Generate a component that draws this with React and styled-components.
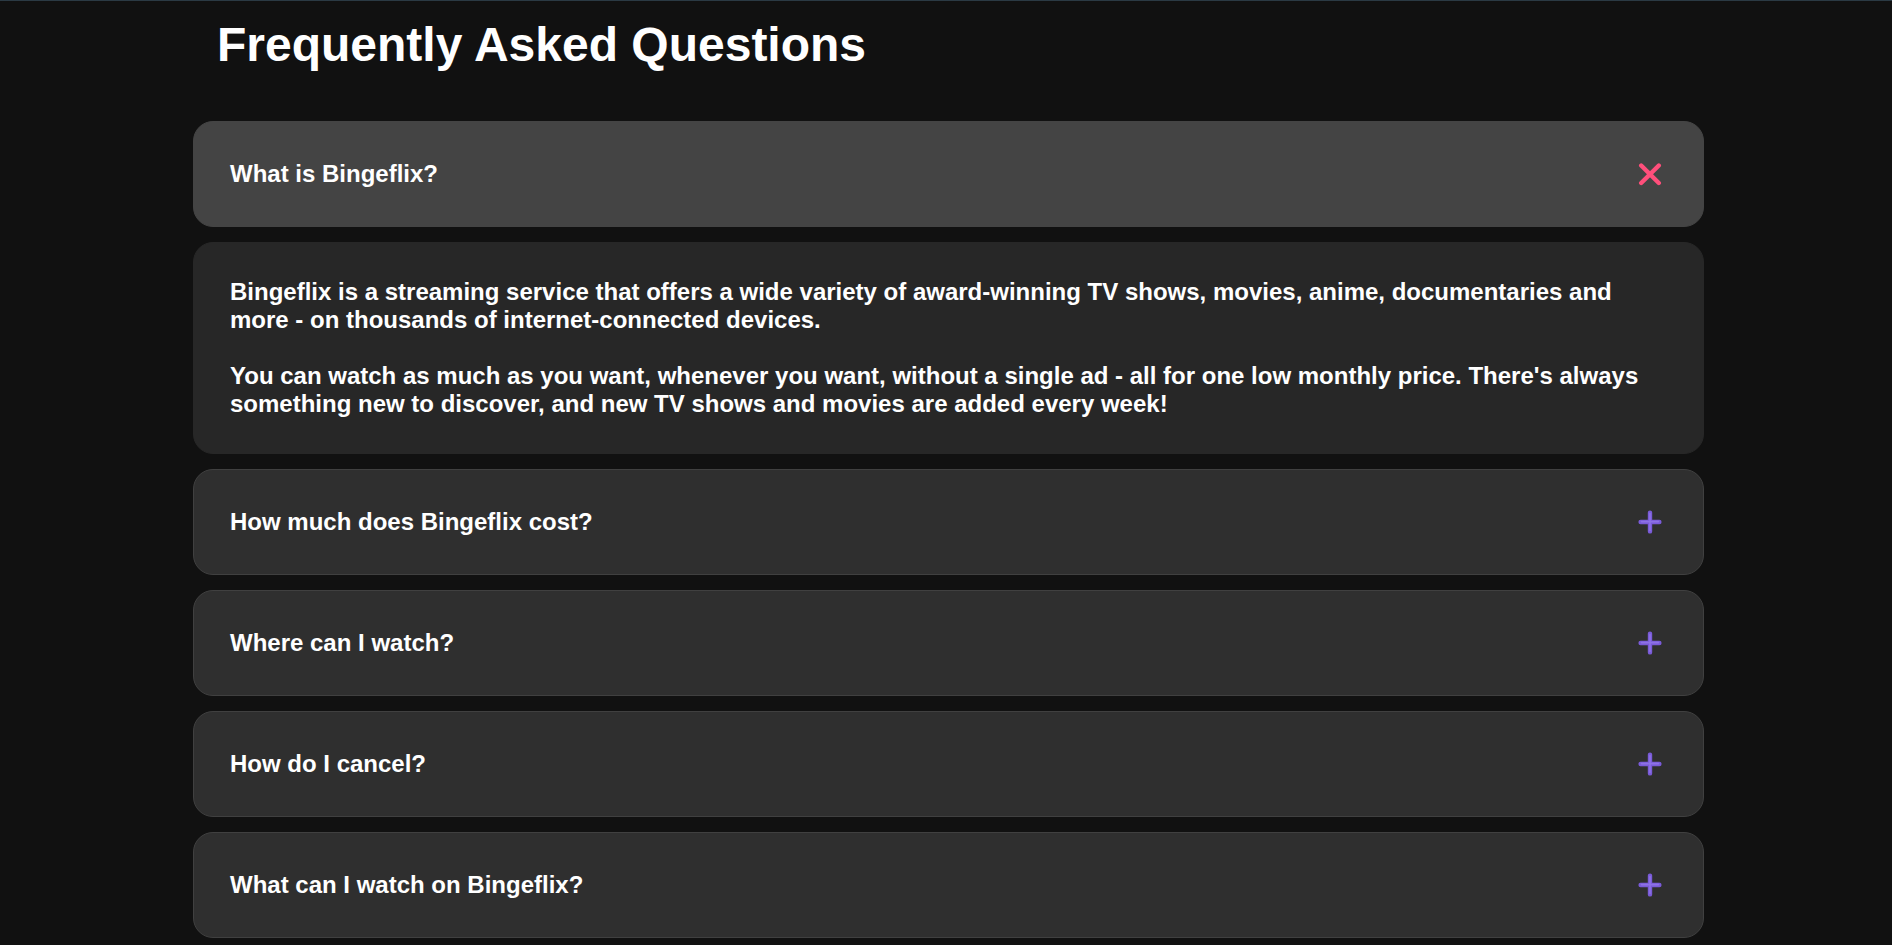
import React, { useState } from 'react';
import styled, { createGlobalStyle } from 'styled-components';

const GlobalStyle = createGlobalStyle`
  html, body {
    margin: 0;
    padding: 0;
    background: #111111;
  }
  body {
    font-family: "Liberation Sans", Arial, sans-serif;
    color: #ffffff;
    border-top: 1px solid #2b3a44;
  }
`;

const Page = styled.main`
  width: 1511px;
  margin: 0 0 0 193px;
  padding-top: 16px;
`;

const Heading = styled.h1`
  margin: 0 0 49px 24px;
  font-size: 48px;
  font-weight: 700;
  line-height: normal;
  color: #ffffff;
`;

const List = styled.div`
  display: flex;
  flex-direction: column;
  gap: 15px;
`;

const Question = styled.button`
  display: flex;
  align-items: center;
  justify-content: space-between;
  width: 100%;
  box-sizing: border-box;
  padding: 38px 38px 38px 36px;
  border-radius: 20px;
  border: 1px solid ${({isOpen}) => (isOpen ? '#444444' : '#404040')};
  background: ${({isOpen}) => (isOpen ? '#444444' : '#2f2f2f')};
  color: #ffffff;
  font-family: inherit;
  font-size: 24px;
  font-weight: 700;
  line-height: normal;
  text-align: left;
  cursor: pointer;
`;

const Answer = styled.div`
  box-sizing: border-box;
  padding: 35px 36px;
  border-radius: 20px;
  border: 1px solid #272727;
  background: #272727;
  font-size: 24px;
  font-weight: 700;
  line-height: normal;
`;

const Paragraph = styled.p`
  margin: 0;

  & + & {
    margin-top: 27.6px;
  }
`;

const IconBox = styled.svg`
  width: 24px;
  height: 24px;
  flex-shrink: 0;
  margin-right: 3px;
`;

const CloseIcon = () => (
    <IconBox viewBox="0 0 24 24" fill="none">
        <path d="M3.2 3.5 L20.8 21 M20.8 3.5 L3.2 21" stroke="#ff4f7b" strokeWidth="4.4" strokeLinecap="round"/>
    </IconBox>
);

const PlusIcon = () => (
    <IconBox viewBox="0 0 24 24" fill="none">
        <path d="M12 2.6 V21.4 M2.6 12 H21.4" stroke="#7a5bd8" strokeWidth="4.4" strokeLinecap="round"/>
        <path d="M12 3.5 V20.5 M3.5 11.6 H20.5" stroke="#8d72e6" strokeWidth="1.6" strokeLinecap="round"/>
    </IconBox>
);

const faqs = [
    {
        q: 'What is Bingeflix?',
        a: [
            'Bingeflix is a streaming service that offers a wide variety of award-winning TV shows, movies, anime, documentaries and more - on thousands of internet-connected devices.',
            "You can watch as much as you want, whenever you want, without a single ad - all for one low monthly price. There's always something new to discover, and new TV shows and movies are added every week!",
        ],
    },
    {q: 'How much does Bingeflix cost?', a: ['Plans range from $8.99 to $17.99 a month. No extra costs, no contracts.']},
    {q: 'Where can I watch?', a: ['Watch anywhere, anytime, on an unlimited number of devices.']},
    {q: 'How do I cancel?', a: ['Bingeflix is flexible. There are no annoying contracts and no commitments.']},
    {q: 'What can I watch on Bingeflix?', a: ['Bingeflix has an extensive library of feature films, documentaries, TV shows, anime and more.']},
];

const App = () => {
    const [open, setOpen] = useState(0);

    return (
        <>
            <GlobalStyle/>
            <Page>
                <Heading>Frequently Asked Questions</Heading>
                <List>
                    {faqs.map((item, i) => (
                        <React.Fragment key={item.q}>
                            <Question isOpen={open === i} onClick={() => setOpen(open === i ? -1 : i)}>
                                {item.q}
                                {open === i ? <CloseIcon/> : <PlusIcon/>}
                            </Question>
                            {open === i && (
                                <Answer>
                                    {item.a.map((text) => <Paragraph key={text}>{text}</Paragraph>)}
                                </Answer>
                            )}
                        </React.Fragment>
                    ))}
                </List>
            </Page>
        </>
    );
};

export default App;
